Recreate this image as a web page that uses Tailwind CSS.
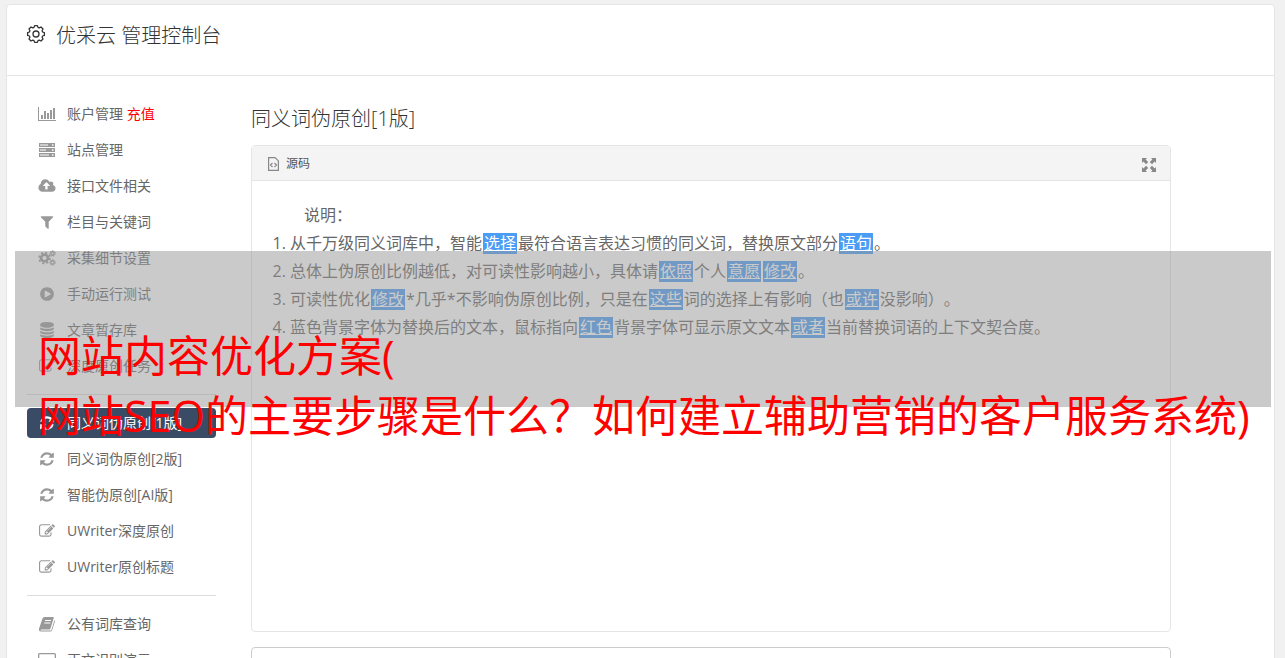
<!DOCTYPE html>
<html lang="zh-CN">
<head>
    <meta charset="UTF-8">
    <meta name="viewport" content="width=device-width, initial-scale=1.0">
    <title>优采云 管理控制台</title>
    <!-- Tailwind CSS (CDN) -->
    <script src="https://cdn.jsdelivr.net/npm/@tailwindcss/browser@4"></script>
</head>
<body class="relative bg-[#f1f1f1] font-['Open_Sans','Noto_Sans_CJK_SC',sans-serif] text-[#666] [text-spacing-trim:space-all]">
    <!-- Icon sprite -->
    <svg class="hidden" xmlns="http://www.w3.org/2000/svg">
        <symbol id="refresh" viewBox="0 0 1792 1792"><path d="M1639 1056q0 5-1 7-64 268-268 434.5t-478 166.5q-146 0-282.5-55t-243.5-157l-129 129q-19 19-45 19t-45-19-19-45v-448q0-26 19-45t45-19h448q26 0 45 19t19 45-19 45l-137 137q71 66 161 102t187 36q134 0 250-65t186-179q11-17 53-117 8-23 30-23h192q13 0 22.5 9.5t9.5 22.5zm25-800v448q0 26-19 45t-45 19h-448q-26 0-45-19t-19-45 19-45l138-138q-148-137-349-137-134 0-250 65t-186 179q-11 17-53 117-8 23-30 23h-199q-13 0-22.5-9.5t-9.5-22.5v-7q65-268 270-434.5t480-166.5q146 0 284 55.5t245 156.5l130-129q19-19 45-19t45 19 19 45z"/></symbol>
        <symbol id="edit" viewBox="0 0 1792 1792"><path d="M888 1184l116-116-152-152-116 116v56h96v96h56zm440-720q-16-16-33 1l-350 350q-17 17-1 33t33-1l350-350q17-17 1-33zm80 594v190q0 119-84.5 203.5t-203.5 84.5h-832q-119 0-203.5-84.5t-84.5-203.5v-832q0-119 84.5-203.5t203.5-84.5h832q63 0 117 25 15 7 18 23 3 17-9 29l-49 49q-14 14-32 8-23-6-45-6h-832q-66 0-113 47t-47 113v832q0 66 47 113t113 47h832q66 0 113-47t47-113v-126q0-13 9-22l64-64q15-15 35-7t20 29zm-96-738l288 288-672 672h-288v-288zm444 132l-92 92-288-288 92-92q28-28 68-28t68 28l152 152q28 28 28 68t-28 68z"/></symbol>
    </svg>

    <div class="mt-1 mr-[10px] mb-4 ml-1.5 rounded border border-[#e5e5e5] bg-white">
        <!-- Header -->
        <header class="flex h-[71px] items-start border-b border-[#e5e5e5] pt-[17px] pl-[19px] text-[#333]">
            <svg class="mt-[2px] mr-[10px] size-5" viewBox="0 0 20 20" fill="none" stroke="currentColor" stroke-width="1.3">
                <circle cx="10" cy="10" r="3"/>
                <path stroke-linejoin="round" d="M8 3.400L8.600 1.600H11.400L12 3.400L13.200 3.900L15 3L17 5L16.100 6.800L16.600 8L18.400 8.600V11.400L16.600 12L16.100 13.200L17 15L15 17L13.200 16.100L12 16.600L11.400 18.400H8.600L8 16.600L6.800 16.100L5 17L3 15L3.900 13.200L3.400 12L1.600 11.400V8.600L3.400 8L3.900 6.800L3 5L5 3L6.800 3.900Z"/>
            </svg>
            <h1 class="text-xl leading-7 font-light">优采云 管理控制台</h1>
        </header>

        <div class="flex px-5 pt-[23px]">
            <!-- Sidebar -->
            <nav class="w-[189px] shrink-0 text-sm [&_a]:mb-1.5 [&_a]:flex [&_a]:h-[30px] [&_a]:items-center [&_a]:gap-[11px] [&_a]:rounded [&_a]:pl-[11px] [&_svg]:h-4 [&_svg]:w-[18px] [&_svg]:fill-[#999]">
                <a href="#">
                    <svg viewBox="0 0 18 16"><path d="M0 1h1v13h17v1H0zM3 9h2v4H3zM6 5h2v8H6zM9 7h2v6H9zM12 4h2v9h-2zM15 2h2v11h-2z"/></svg>
                    <span>账户管理 <span class="text-[#f00]">充值</span></span>
                </a>
                <a href="#">
                    <svg viewBox="0 0 18 16"><path fill-rule="evenodd" d="M1 1h16v4H1zM2 2.500h8v1H2zM14 2.300h1.500v1.400H14zM1 6h16v4H1zM2 7.500h6v1H2zM14 7.300h1.500v1.400H14zM1 11h16v4H1zM2 12.500h9v1H2zM14 12.300h1.500v1.400H14z"/></svg>
                    站点管理
                </a>
                <a href="#">
                    <svg viewBox="0 0 1920 1792"><path d="M1280 864q0-14-9-23l-352-352q-9-9-23-9t-23 9l-351 351q-10 12-10 24 0 14 9 23t23 9h224v352q0 13 9.500 22.500t22.500 9.500h192q13 0 22.500-9.500t9.500-22.500v-352h224q13 0 22.500-9.500t9.500-22.500zm640 288q0 159-112.500 271.500t-271.500 112.500h-1088q-185 0-316.500-131.500t-131.500-316.500q0-130 70-240t188-165q-2-30-2-43 0-212 150-362t362-150q156 0 285.500 87t188.500 231q71-62 166-62 106 0 181 75t75 181q0 76-41 138 130 31 213.500 135.500t83.500 238.500z"/></svg>
                    接口文件相关
                </a>
                <a href="#">
                    <svg viewBox="0 0 1792 1792"><path d="M1595 295q17 41-14 70l-493 493v742q0 42-39 59-13 5-25 5-27 0-45-19l-256-256q-19-19-19-45v-486l-493-493q-31-29-14-70 17-39 59-39h1280q42 0 59 39z"/></svg>
                    栏目与关键词
                </a>
                <a href="#">
                    <svg viewBox="0 0 18 16" class="fill-none! stroke-[#999]">
                        <circle cx="6.500" cy="8" r="3.400" stroke-width="2.600"/>
                        <circle cx="6.500" cy="8" r="5.400" stroke-width="1.700" stroke-dasharray="2.120"/>
                        <circle cx="14.500" cy="3.500" r="1.700" stroke-width="1.400"/>
                        <circle cx="14.500" cy="3.500" r="2.800" stroke-width="1" stroke-dasharray="1.260"/>
                        <circle cx="14.500" cy="12.500" r="1.700" stroke-width="1.400"/>
                        <circle cx="14.500" cy="12.500" r="2.800" stroke-width="1" stroke-dasharray="1.260"/>
                    </svg>
                    采集细节设置
                </a>
                <a href="#">
                    <svg viewBox="0 0 1792 1792"><path d="M896 128q209 0 385.500 103t279.500 279.500 103 385.500-103 385.500-279.500 279.500-385.500 103-385.500-103-279.500-279.500-103-385.500 103-385.500 279.500-279.500 385.500-103zm384 823q32-18 32-55t-32-55l-544-320q-31-19-64-1-32 19-32 56v640q0 37 32 56 16 8 32 8 17 0 32-9z"/></svg>
                    手动运行测试
                </a>
                <a href="#">
                    <svg viewBox="0 0 1792 1792"><path d="M896 768q237 0 443-43t325-127v170q0 69-103 128t-280 93.500-385 34.500-385-34.500-280-93.500-103-128v-170q119 84 325 127t443 43zm0 768q237 0 443-43t325-127v170q0 69-103 128t-280 93.500-385 34.500-385-34.500-280-93.500-103-128v-170q119 84 325 127t443 43zm0-384q237 0 443-43t325-127v170q0 69-103 128t-280 93.500-385 34.500-385-34.500-280-93.500-103-128v-170q119 84 325 127t443 43zm0-1152q208 0 385 34.500t280 93.500 103 128v128q0 69-103 128t-280 93.500-385 34.500-385-34.500-280-93.500-103-128v-128q0-69 103-128t280-93.500 385-34.500z"/></svg>
                    文章暂存库
                </a>
                <a href="#"><svg><use href="#edit"/></svg>深度原创任务</a>
                <hr class="mt-[13px] mb-[13px] border-[#ddd]">
                <a href="#" class="bg-[#3a4b66] text-white"><svg class="fill-white!"><use href="#refresh"/></svg>同义词伪原创[1版]</a>
                <a href="#"><svg><use href="#refresh"/></svg>同义词伪原创[2版]</a>
                <a href="#"><svg><use href="#refresh"/></svg>智能伪原创[AI版]</a>
                <a href="#"><svg><use href="#edit"/></svg>UWriter深度原创</a>
                <a href="#"><svg><use href="#edit"/></svg>UWriter原创标题</a>
                <hr class="mt-[13px] mb-[13px] border-[#ddd]">
                <a href="#">
                    <svg viewBox="0 0 18 16"><path fill-rule="evenodd" d="M6.500 1H15q1 0 .7 1L12.500 12.500q-.3 1-1.300 1H3.300q-.8 0-.8.500t.8.600h9q.9 0 1.200-.9L16.500 4q.7.500.4 1.500L14.200 14q-.5 1.500-2 1.500H3Q.5 15.300 1 12.800L4.500 2.500Q5 1 6.500 1zM7.200 4l-.3 1h6l.3-1zM6.500 6.500l-.3 1h6l.3-1z"/></svg>
                    公有词库查询
                </a>
                <a href="#">
                    <svg viewBox="0 0 18 16"><path fill-rule="evenodd" d="M1.500 1h15q1.500 0 1.500 1.500v8q0 1.500-1.500 1.500H11v2h2v1H5v-1h2v-2H1.500Q0 12 0 10.500v-8Q0 1 1.500 1zM1.300 2.300v7.400h15.400V2.300z"/></svg>
                    正文识别演示
                </a>
            </nav>

            <!-- Content -->
            <main class="ml-[35px] min-w-0 max-w-[920px] flex-1">
                <h2 class="pt-1.5 pb-3 text-xl leading-7 font-light text-[#333]">同义词伪原创[1版]</h2>
                <section class="h-[487px] rounded border border-[#e5e5e5]">
                    <div class="flex h-[35px] items-center justify-between border-b border-[#e5e5e5] bg-[#f4f4f4] pr-[14px] pl-4">
                        <button type="button" class="flex items-center gap-[7px] pt-0.5 text-xs text-[#555]">
                            <svg class="h-[14px] w-[11px]" viewBox="0 0 11 14" fill="none" stroke="#888" stroke-width="1.200"><path d="M.6.600h6.500l3.300 3.300v9.500H.6zM4.500 6l-2 2 2 2M6.500 6l2 2-2 2"/></svg>
                            源码
                        </button>
                        <button type="button" aria-label="全屏">
                            <svg class="mt-[3px] size-[14px]" viewBox="0 0 14 14" fill="#888"><path d="M0 0h5L3.600 1.400 6.200 4 4 6.200 1.400 3.600 0 5zM14 0v5l-1.400-1.400L10 6.200 7.800 4l2.600-2.600L9 0zM0 14V9l1.400 1.400L4 7.800 6.200 10l-2.600 2.600L5 14zM14 14H9l1.400-1.400L7.800 10 10 7.800l2.600 2.600L14 9z"/></svg>
                        </button>
                    </div>
                    <div class="px-5 pt-5 text-base leading-7 [&_u]:mx-px [&_u]:inline-block [&_u]:h-[21px] [&_u]:bg-[#4a9cf4] [&_u]:px-px [&_u]:leading-[21px] [&_u]:text-white">
                        <p class="indent-8">说明：</p>
                        <ol class="list-decimal pl-[18px]">
                            <li>从千万级同义词库中，智能<u>选择</u>最符合语言表达习惯的同义词，替换原文部分<u>语句</u>。</li>
                            <li>总体上伪原创比例越低，对可读性影响越小，具体请<u>依照</u>个人<u>意愿</u><u>修改</u>。</li>
                            <li>可读性优化<u>修改</u>*几乎*不影响伪原创比例，只是在<u>这些</u>词的选择上有影响（也<u>或许</u>没影响）。</li>
                            <li>蓝色背景字体为替换后的文本，鼠标指向<u>红色</u>背景字体可显示原文文本<u>或者</u>当前替换词语的上下文契合度。</li>
                        </ol>
                    </div>
                </section>
                <textarea aria-label="原文" class="mt-[15px] block h-40 w-full resize-none rounded border border-[#ccc]"></textarea>
            </main>
        </div>
    </div>

    <!-- Banner over the page -->
    <div class="absolute top-[251px] right-[14px] left-[15px] h-[156px] bg-[#969696]/50 pt-[75px] pl-[23px] text-[43px] leading-[60px] whitespace-nowrap text-[#f00]">
        网站内容优化方案(<br>网站SEO的主要步骤是什么？如何建立辅助营销的客户服务系统)
    </div>
</body>
</html>
